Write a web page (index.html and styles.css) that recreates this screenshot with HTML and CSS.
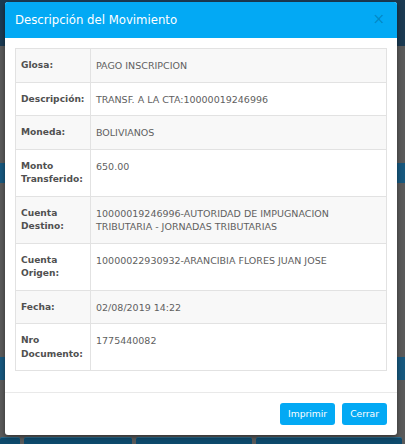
FILE: index.html
```html
<!DOCTYPE html>
<html lang="es">
<head>
<meta charset="utf-8">
<title>Descripción del Movimiento</title>
<link rel="stylesheet" href="styles.css">
</head>
<body>
<div class="page">
  <div class="navbar"></div>
  <div class="gap g1"></div>
  <div class="bar b1"></div>
  <div class="gap g2"></div>
  <div class="bar b2"></div>
  <div class="gap g3"></div>
  <div class="tabs">
    <div class="tab t1"></div>
    <div class="tab t2"></div>
    <div class="tab t3"></div>
    <div class="tab t4"></div>
  </div>
</div>

<div class="overlay">
  <div class="modal">
    <div class="modal-header">
      <h4 class="modal-title">Descripción del Movimiento</h4>
      <span class="close">×</span>
    </div>
    <div class="modal-body">
      <table class="detail">
        <colgroup><col class="c-label"><col></colgroup>
        <tbody>
          <tr><th>Glosa:</th><td>PAGO INSCRIPCION</td></tr>
          <tr><th>Descripción:</th><td>TRANSF. A LA CTA:10000019246996</td></tr>
          <tr><th>Moneda:</th><td>BOLIVIANOS</td></tr>
          <tr><th>Monto Transferido:</th><td>650.00</td></tr>
          <tr><th>Cuenta Destino:</th><td>10000019246996-AUTORIDAD DE IMPUGNACION TRIBUTARIA - JORNADAS TRIBUTARIAS</td></tr>
          <tr><th>Cuenta Origen:</th><td>10000022930932-ARANCIBIA FLORES JUAN JOSE</td></tr>
          <tr><th>Fecha:</th><td>02/08/2019 14:22</td></tr>
          <tr><th>Nro Documento:</th><td>1775440082</td></tr>
        </tbody>
      </table>
    </div>
    <div class="modal-footer">
      <button class="btn">Imprimir</button>
      <button class="btn">Cerrar</button>
    </div>
  </div>
</div>
</body>
</html>
```

FILE: styles.css
```css
* { box-sizing: border-box; }
html, body {
  margin: 0;
  padding: 0;
  width: 405px;
  height: 444px;
  overflow: hidden;
  font-family: "DejaVu Sans", Verdana, sans-serif;
}
body { position: relative; background: #5a5a5a; }

.page {
  display: flex;
  flex-direction: column;
  height: 444px;
}
.navbar { height: 46px; background: #1b3a52; flex: none; }
.gap { flex: none; }
.g1 { height: 117px; }
.bar { flex: none; background: #17587e; }
.b1 { height: 20px; }
.g2 { height: 174px; }
.b2 { height: 23px; }
.g3 { height: 57px; }
.tabs {
  display: flex;
  gap: 4px;
  height: 7px;
  flex: none;
}
.tab { background: #0e4a6c; border-top: 1px solid #2b6a8c; border-radius: 2px 2px 0 0; }
.t1 { width: 20px; }
.t2 { width: 108px; }
.t3 { width: 116px; }
.t4 { width: 146px; }

.overlay {
  position: absolute;
  left: 5px;
  top: 2px;
}
.modal {
  width: 392px;
  height: 433px;
  background: #fff;
  border-radius: 3px;
  box-shadow: 0 2px 5px rgba(0,0,0,0.45);
  display: flex;
  flex-direction: column;
  overflow: hidden;
}
.modal-header {
  height: 36px;
  background: #03a9f4;
  display: flex;
  align-items: center;
  justify-content: space-between;
  padding: 0 12px 0 10px;
  flex: none;
}
.modal-title {
  margin: 0;
  font-size: 11.7px;
  font-weight: normal;
  color: #fff;
  line-height: 1;
  padding-top: 1px;
}
.close {
  font-size: 15px;
  line-height: 1;
  color: rgba(0,0,0,0.2);
  margin-top: -1px;
}

.modal-body {
  padding: 10px 10px 0;
  height: 355px;
  flex: none;
  border-bottom: 1px solid #e9e9e9;
}
.detail {
  width: 372px;
  border-collapse: collapse;
  table-layout: fixed;
  font-size: 9.5px;
  line-height: 13.5px;
  color: #606060;
}
.c-label { width: 75px; }
.detail th, .detail td {
  border: 1px solid #e2e2e2;
  padding: 10px 5px 9px;
  text-align: left;
  vertical-align: top;
}
.detail th { font-weight: bold; color: #505050; font-size: 9.1px; }
.detail tr:nth-child(odd) { background: #f8f8f8; }

.modal-footer {
  display: flex;
  justify-content: flex-end;
  gap: 7px;
  padding: 10px 10px 0;
}
.btn {
  height: 22px;
  border: none;
  border-radius: 3px;
  background: #03a9f4;
  color: #fff;
  font-family: inherit;
  font-size: 9.2px;
  padding: 0 8px;
  line-height: 22px;
}
```
